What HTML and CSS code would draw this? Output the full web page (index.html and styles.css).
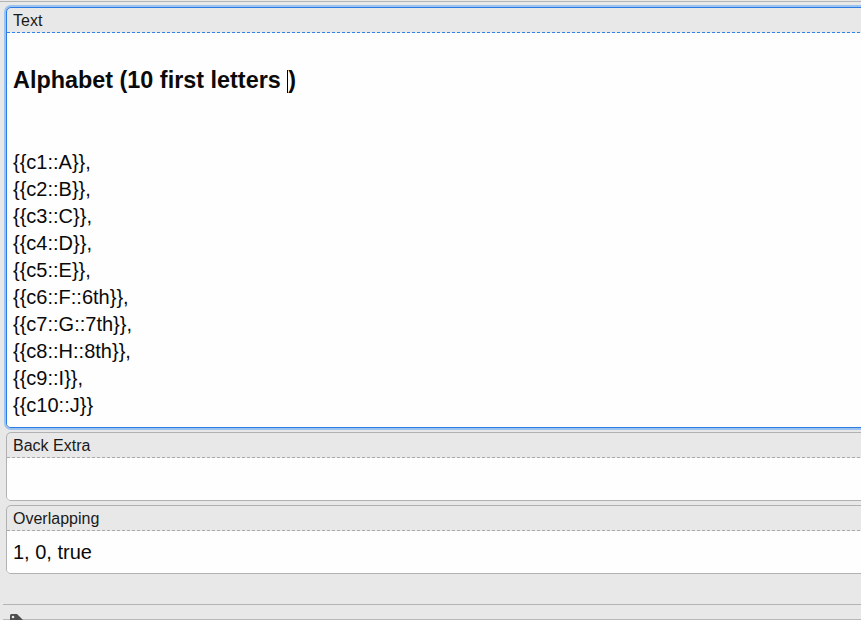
FILE: index.html
```html
<!DOCTYPE html>
<html>
<head>
<meta charset="utf-8">
<link rel="stylesheet" href="styles.css">
</head>
<body>
<div class="topline"></div>
<div class="fields">
  <div class="field focused">
    <div class="label">Text</div>
    <div class="content rich">
      <h3 class="heading">Alphabet (10 first letters <span class="caret"></span>)</h3>
      <div class="line">{{c1::A}},</div>
      <div class="line">{{c2::B}},</div>
      <div class="line">{{c3::C}},</div>
      <div class="line">{{c4::D}},</div>
      <div class="line">{{c5::E}},</div>
      <div class="line">{{c6::F::6th}},</div>
      <div class="line">{{c7::G::7th}},</div>
      <div class="line">{{c8::H::8th}},</div>
      <div class="line">{{c9::I}},</div>
      <div class="line">{{c10::J}}</div>
    </div>
  </div>
  <div class="field">
    <div class="label">Back Extra</div>
    <div class="content"></div>
  </div>
  <div class="field">
    <div class="label">Overlapping</div>
    <div class="content">1, 0, true</div>
  </div>
</div>
<div class="tagbar">
  <svg class="tagicon" width="15" height="14" viewBox="0 0 15 14">
    <path d="M1 2.5 Q1 1 2.5 1 H8 L14 7 L8 13 H2.5 Q1 13 1 11.5 Z" fill="#4d4d4d"/>
    <circle cx="4" cy="4" r="1.3" fill="#e8e8e8"/>
  </svg>
</div>
</body>
</html>
```
FILE: styles.css
```css
html, body {
  margin: 0;
  padding: 0;
}
body {
  background: #e8e8e8;
  overflow: hidden;
  font-family: "Liberation Sans", Arial, Helvetica, sans-serif;
  color: #111;
}
.topline {
  margin-top: 1px;
  height: 1px;
  background: #b3b3b3;
}
.fields {
  margin-top: 5px;
  padding-left: 6px;
  display: flex;
  flex-direction: column;
  gap: 4px;
}
.field {
  margin-right: -20px;
  border: 1px solid #b1b1b1;
  border-radius: 5px;
  background: #e8e8e8;
  overflow: hidden;
}
.field.focused {
  border-color: #2c7be5;
  box-shadow: 0 0 0 2px #9cc2f0;
  overflow: visible;
}
.label {
  height: 24px;
  line-height: 25px;
  padding-left: 6px;
  font-size: 16px;
  color: #1a1a1a;
  border-bottom: 1px dashed #a9a9a9;
}
.focused .label {
  border-bottom-color: #2f82ea;
}
.content {
  background: #fefefe;
  padding: 8px 7px 8px 6px;
  font-size: 20px;
  line-height: 26px;
  min-height: 26px;
  color: #0a0a0a;
}
.focused .content {
  border-radius: 0 0 4px 4px;
}
.heading {
  font-size: 23.4px;
  line-height: 27px;
  font-weight: bold;
  margin: 26px 0 55px;
}
.caret {
  display: inline-block;
  width: 1px;
  height: 23px;
  background: #000;
  vertical-align: -5px;
}
.line {
  line-height: 27px;
}
.tagbar {
  position: relative;
  margin: 30px 0 0 3px;
  border-top: 1px solid #b3b3b3;
  border-bottom: 1px solid #b8b8b8;
  height: 14px;
}
.tagicon {
  position: absolute;
  left: 6px;
  top: 8px;
}
```
